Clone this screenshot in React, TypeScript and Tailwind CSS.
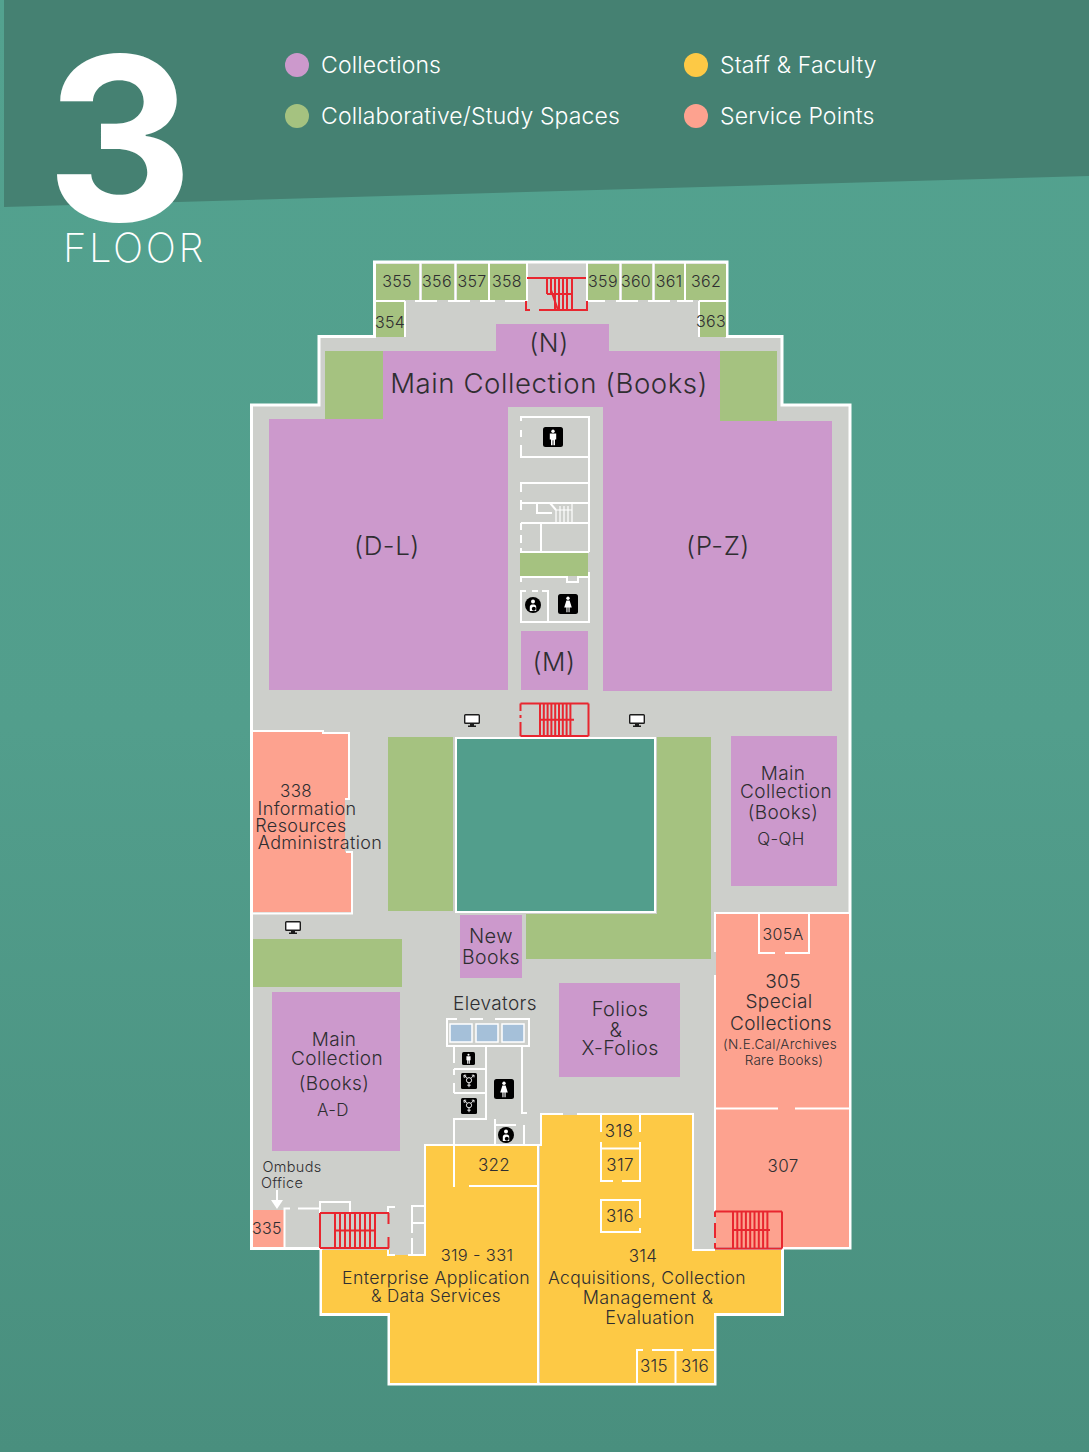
const FONT = "font-[Inter,'Liberation_Sans',sans-serif]";

const legend = [
  { label: "Collections", dot: "bg-[#cc99cc]" },
  { label: "Staff & Faculty", dot: "bg-[#fdc945]" },
  { label: "Collaborative/Study Spaces", dot: "bg-[#a5c280]" },
  { label: "Service Points", dot: "bg-[#fda28f]" },
];

// plain rectangular rooms, drawn over the floor plate
const rooms = [
  // top wing
  "left-[376px] top-[264px] h-[36px] w-[43px] bg-[#a5c280]",
  "left-[422px] top-[264px] h-[36px] w-[32px] bg-[#a5c280]",
  "left-[457px] top-[264px] h-[36px] w-[31px] bg-[#a5c280]",
  "left-[490px] top-[264px] h-[36px] w-[36px] bg-[#a5c280]",
  "left-[588px] top-[264px] h-[36px] w-[31px] bg-[#a5c280]",
  "left-[622px] top-[264px] h-[36px] w-[30px] bg-[#a5c280]",
  "left-[655px] top-[264px] h-[36px] w-[29px] bg-[#a5c280]",
  "left-[686px] top-[264px] h-[36px] w-[40px] bg-[#a5c280]",
  "left-[376px] top-[302px] h-[35px] w-[28px] bg-[#a5c280]",
  "left-[700px] top-[302px] h-[35px] w-[26px] bg-[#a5c280]",
  // main collection
  "left-[325px] top-[351px] h-[68px] w-[58px] bg-[#a5c280]",
  "left-[720px] top-[351px] h-[70px] w-[57px] bg-[#a5c280]",
  "left-[496px] top-[324px] h-[27px] w-[113px] bg-[#cc99cc]",
  "left-[383px] top-[351px] h-[56px] w-[337px] bg-[#cc99cc]",
  "left-[269px] top-[419px] h-[271px] w-[239px] bg-[#cc99cc]",
  "left-[383px] top-[407px] h-[12px] w-[125px] bg-[#cc99cc]",
  "left-[603px] top-[421px] h-[270px] w-[229px] bg-[#cc99cc]",
  "left-[603px] top-[407px] h-[14px] w-[117px] bg-[#cc99cc]",
  "left-[521px] top-[631px] h-[59px] w-[67px] bg-[#cc99cc]",
  "left-[520px] top-[553px] h-[23px] w-[68px] bg-[#a5c280]",
  // middle
  "left-[388px] top-[737px] h-[174px] w-[65px] bg-[#a5c280]",
  "left-[731px] top-[736px] h-[150px] w-[106px] bg-[#cc99cc]",
  "left-[253px] top-[939px] h-[48px] w-[149px] bg-[#a5c280]",
  "left-[460px] top-[915px] h-[63px] w-[62px] bg-[#cc99cc]",
  "left-[272px] top-[992px] h-[159px] w-[128px] bg-[#cc99cc]",
  "left-[559px] top-[983px] h-[94px] w-[121px] bg-[#cc99cc]",
  // service points
  "left-[716px] top-[914px] h-[333px] w-[133px] bg-[#fda28f]",
  "left-[253px] top-[1210px] h-[37px] w-[31px] bg-[#fda28f]",
];

const labels = [
  { t: "355", c: "left-[397px] top-[281px] text-[16px]" },
  { t: "356", c: "left-[437px] top-[281px] text-[16px]" },
  { t: "357", c: "left-[472px] top-[281px] text-[16px]" },
  { t: "358", c: "left-[507px] top-[281px] text-[16px]" },
  { t: "359", c: "left-[603px] top-[281px] text-[16px]" },
  { t: "360", c: "left-[636px] top-[281px] text-[16px]" },
  { t: "361", c: "left-[669px] top-[281px] text-[16px]" },
  { t: "362", c: "left-[706px] top-[281px] text-[16px]" },
  { t: "354", c: "left-[390px] top-[322px] text-[16px]" },
  { t: "363", c: "left-[711px] top-[321px] text-[16px]" },
  { t: "(N)", c: "left-[549px] top-[343px] text-[26px]" },
  { t: "Main Collection (Books)", c: "left-[549px] top-[384px] text-[27.6px]" },
  { t: "(D-L)", c: "left-[387px] top-[546px] text-[26px]" },
  { t: "(P-Z)", c: "left-[718px] top-[546px] text-[26px]" },
  { t: "(M)", c: "left-[554px] top-[662px] text-[26px]" },
  { t: "338", c: "left-[296px] top-[791px] text-[17px]" },
  { t: "Information", c: "left-[307px] top-[809px] text-[18px]" },
  { t: "Resources", c: "left-[301px] top-[826px] text-[18px]" },
  { t: "Administration", c: "left-[320px] top-[843px] text-[18px]" },
  { t: "Main", c: "left-[783px] top-[773px] text-[19px]" },
  { t: "Collection", c: "left-[786px] top-[791px] text-[19px]" },
  { t: "(Books)", c: "left-[783px] top-[812px] text-[19px]" },
  { t: "Q-QH", c: "left-[781px] top-[839px] text-[17px]" },
  { t: "New", c: "left-[491px] top-[936px] text-[20px]" },
  { t: "Books", c: "left-[491px] top-[958px] text-[19.5px]" },
  { t: "Elevators", c: "left-[495px] top-[1003px] text-[19px]" },
  { t: "Folios", c: "left-[620px] top-[1009px] text-[20px]" },
  { t: "&", c: "left-[616px] top-[1030px] text-[20px]" },
  { t: "X-Folios", c: "left-[620px] top-[1049px] text-[19.5px]" },
  { t: "Main", c: "left-[334px] top-[1039px] text-[19px]" },
  { t: "Collection", c: "left-[337px] top-[1058px] text-[19px]" },
  { t: "(Books)", c: "left-[334px] top-[1083px] text-[19px]" },
  { t: "A-D", c: "left-[333px] top-[1110px] text-[17px]" },
  { t: "305A", c: "left-[783px] top-[934px] text-[16px]" },
  { t: "305", c: "left-[783px] top-[981px] text-[19px]" },
  { t: "Special", c: "left-[779px] top-[1001px] text-[19px]" },
  { t: "Collections", c: "left-[781px] top-[1023px] text-[19px]" },
  { t: "(N.E.Cal/Archives", c: "left-[780px] top-[1045px] text-[13.5px]" },
  { t: "Rare Books)", c: "left-[784px] top-[1061px] text-[13.5px]" },
  { t: "307", c: "left-[783px] top-[1166px] text-[17px]" },
  { t: "322", c: "left-[494px] top-[1165px] text-[17px]" },
  { t: "318", c: "left-[619px] top-[1131px] text-[17px]" },
  { t: "317", c: "left-[620px] top-[1165px] text-[17px]" },
  { t: "316", c: "left-[620px] top-[1216px] text-[17px]" },
  { t: "314", c: "left-[643px] top-[1256px] text-[17px]" },
  { t: "Acquisitions, Collection", c: "left-[647px] top-[1278px] text-[17.5px]" },
  { t: "Management &", c: "left-[648px] top-[1298px] text-[18px]" },
  { t: "Evaluation", c: "left-[650px] top-[1318px] text-[18px]" },
  { t: "315", c: "left-[654px] top-[1366px] text-[17px]" },
  { t: "316", c: "left-[695px] top-[1366px] text-[17px]" },
  { t: "319 - 331", c: "left-[477px] top-[1255px] text-[16.5px]" },
  { t: "Enterprise Application", c: "left-[436px] top-[1278px] text-[17.7px]" },
  { t: "& Data Services", c: "left-[436px] top-[1296px] text-[17px]" },
  { t: "335", c: "left-[267px] top-[1228px] text-[16px]" },
  { t: "Ombuds", c: "left-[292px] top-[1167px] text-[14.5px]" },
  { t: "Office", c: "left-[282px] top-[1183px] text-[14.5px]" },
];

const WALLS = [
  // top wing
  "M420.5 263V301M455.5 263V301M489 263V301M527 263V301M587 263V301M620.5 263V301M653.5 263V301M685 263V301",
  "M376 301H405M415 301H437M448 301H470M480 301H495M505 301H526M588 301H605M616 301H638M648 301H670M677 301H693M699 301H726",
  "M405 301V337M699 301V337",
  // centre core
  "M521 421V417H589V552M521 430V437M521 445V457H589M521 492V483H589M521 500V510M521 503H589",
  "M537 503V513H552M550 503L556 510M521 523H589M541 523V552M521 523V530M521 535V543M521 548V552H589",
  "M521 582V577H567V582H578V577H589M589 572V622H521V591H526M532 591H538M542 591H548V622",
  // 338
  "M252 731H323V733H349V799H345M346 852H352V913.5H252",
  // elevators and washrooms
  "M447 1030V1019H457M470 1019H483M495 1019H525H529V1046H447V1030",
  "M454 1047V1063M454 1069V1075M454 1083V1093M454 1118V1187M454 1069H486M454 1093H486M486 1047V1119H454M495 1119V1145M495 1125H516M524 1125V1145M522 1047V1113H527",
  // staff wing
  "M425 1207V1145H541V1114H563M577 1114H693V1250H715M469 1186H538M538 1146V1384",
  "M601 1114V1132M601 1142V1181H613M622 1181H640V1142M640 1132V1114M601 1148.5H640",
  "M640 1218V1200H601V1232H640V1228M637 1384V1350H643M652 1350H683M692 1350H714M675.5 1350V1384",
  // special collections
  "M715 913H850M715 912V952M715 975V1211M716 1108.5H778M795 1108.5H849M759 914V953H775M785 953H809V914",
  // south west
  "M284.5 1248V1208.5H290M298 1208.5H320M320 1213V1202H350V1213M388 1213V1207H395M388 1250V1255H395M408 1255H425V1207M412 1233V1206H425M412 1238V1255M412 1223H425",
];

function Stairs({ x, y, w, h, from, to, step, sides }: { x: number; y: number; w: number; h: number; from: number; to: number; step: number; sides: string }) {
  const treads = [];
  for (let tx = from; tx <= to; tx += step) treads.push(`M${tx} ${y}V${y + h}`);
  return (
    <path
      d={`${sides}M${x} ${y}H${x + w}M${x} ${y + h}H${x + w}M${from} ${y + h / 2}H${to}${treads.join("")}`}
      fill="none"
      stroke="#e8262f"
      strokeWidth="2"
    />
  );
}

function FloorPlate() {
  return (
    <svg className="absolute left-0 top-0" width="1089" height="1452">
      <path
        d="M374.5 262H727V336.5H782V405H850V1248H782.5V1314.5H715V1384H389V1314.5H321V1248.5H251.5V405H319V336.5H374.5Z"
        fill="#cdcfcb"
        stroke="#fff"
        strokeWidth="3"
      />
      <rect x="456" y="738" width="199" height="174" fill="#529e8c" stroke="#fff" strokeWidth="2" />
      <path d="M657 737H711V959H526V914H657Z" fill="#a5c280" />
      <path d="M253 732H323V734H349V799H345V852H351V912H253Z" fill="#fda28f" />
      <path d="M425 1146H538V1383H390V1313H322V1250H390V1255H425Z" fill="#fdc945" />
      <path d="M541 1115H693V1250H781V1313H714V1383H540V1146H541Z" fill="#fdc945" />
    </svg>
  );
}

function Walls() {
  return (
    <svg className="absolute left-0 top-0" width="1089" height="1452">
      <path d={WALLS.join("")} fill="none" stroke="#fff" strokeWidth="2" />
      {/* elevator cars */}
      <rect x="450" y="1024" width="22" height="18" fill="#a5c0d9" stroke="#fff" strokeWidth="1.5" />
      <rect x="476" y="1024" width="22" height="18" fill="#a5c0d9" stroke="#fff" strokeWidth="1.5" />
      <rect x="502" y="1024" width="22" height="18" fill="#a5c0d9" stroke="#fff" strokeWidth="1.5" />
      {/* white stair in the core */}
      <path d="M556 510V523M560 506V523M564 506V523M568 506V523M572 503V523M556 510H572" stroke="#fff" strokeWidth="1.2" fill="none" />
      {/* stairs */}
      <Stairs x={520.5} y={703.5} w={68} h={32.5} from={540} to={574} step={3.8} sides="M520.5 703.5V711M520.5 715V718M520.5 722V736M588.5 703.5V736" />
      <Stairs x={320} y={1213} w={69} h={35} from={335} to={376} step={5} sides="M320 1213V1248M388.500 1213V1224M388.500 1237V1248" />
      <Stairs x={715} y={1211.5} w={67} h={37} from={733} to={770} step={4.3} sides="M715 1211.500V1217M715 1223V1238M715 1243V1248.500M782 1211.500V1248.500" />
      <path
        d="M527 278H586M526 301V310H530M539 310H587V301M551 290L558 310M547 278V294M551 278V294M555 278V310M559 278V310M563 278V310M567 278V310M572 278V310M547 294H572"
        fill="none"
        stroke="#e8262f"
        strokeWidth="2"
      />
      {/* arrow to the ombuds office */}
      <path d="M277 1190V1202" stroke="#fff" strokeWidth="2" />
      <path d="M271 1200H283L277 1209Z" fill="#fff" />
    </svg>
  );
}

function ManIcon({ className }: { className: string }) {
  return (
    <svg className={`absolute ${className}`} viewBox="0 0 20 20">
      <rect width="20" height="20" rx="2.5" fill="#000" />
      <circle cx="10" cy="4.2" r="1.7" fill="#fff" />
      <path d="M6.8 6.6h6.4v6h-1.2v5.6h-1.6v-5h-.8v5H8v-5.6H6.8z" fill="#fff" />
    </svg>
  );
}

function WomanIcon({ className }: { className: string }) {
  return (
    <svg className={`absolute ${className}`} viewBox="0 0 20 20">
      <rect width="20" height="20" rx="2.5" fill="#000" />
      <circle cx="10" cy="4.2" r="1.7" fill="#fff" />
      <path d="M8.4 6.4h3.2l2.2 7h-2.2v4.8h-1.1v-4.8h-1v4.8H8.400v-4.800H6.200z" fill="#fff" />
    </svg>
  );
}

function TransIcon({ className }: { className: string }) {
  return (
    <svg className={`absolute ${className}`} viewBox="0 0 16 16">
      <rect width="16" height="16" rx="1.500" fill="#000" />
      <g fill="none" stroke="#fff" strokeWidth="0.900">
        <circle cx="8" cy="7.200" r="2.600" />
        <path d="M8 9.800V14.200M6.300 12.200H9.700M6.100 5.300L3 2.200M3 4.400V2.200H5.200M9.900 5.300L13 2.200M10.800 2.200H13V4.400M3.400 4.800L5 3.200" />
      </g>
    </svg>
  );
}

function BabyIcon({ className }: { className: string }) {
  return (
    <svg className={`absolute ${className}`} viewBox="0 0 16 16">
      <circle cx="8" cy="8" r="8" fill="#000" />
      <circle cx="8" cy="4.600" r="2" fill="#fff" />
      <path d="M4.800 14V9.800C4.800 8 6.300 7.400 8 7.400S11.200 8 11.200 9.800V14Z" fill="#fff" />
      <circle cx="8.800" cy="11.800" r="2" fill="#000" />
    </svg>
  );
}

function MonitorIcon({ className }: { className: string }) {
  return (
    <svg className={`absolute ${className}`} viewBox="0 0 16 13">
      <rect x="0.700" y="0.700" width="14.600" height="8.600" rx="0.800" fill="#fff" stroke="#1c1c1c" strokeWidth="1.400" />
      <path d="M6 10h4v1.500h2V13H4v-1.500h2z" fill="#1c1c1c" />
    </svg>
  );
}

function FloorMap() {
  return (
    <div className="absolute left-0 top-0 h-[1452px] w-[1089px]">
      <FloorPlate />
      {rooms.map((c) => (
        <div key={c} className={`absolute ${c}`} />
      ))}
      <Walls />
      <ManIcon className="left-[543px] top-[427px] size-5" />
      <BabyIcon className="left-[525px] top-[597px] size-4" />
      <WomanIcon className="left-[558px] top-[594px] size-5" />
      <ManIcon className="left-[462px] top-[1052px] size-[13px]" />
      <TransIcon className="left-[461px] top-[1073px] size-4" />
      <TransIcon className="left-[461px] top-[1098px] size-4" />
      <WomanIcon className="left-[494px] top-[1079px] size-5" />
      <BabyIcon className="left-[498px] top-[1127px] size-4" />
      <MonitorIcon className="left-[464px] top-[714px] h-[13px] w-4" />
      <MonitorIcon className="left-[629px] top-[714px] h-[13px] w-4" />
      <MonitorIcon className="left-[285px] top-[921px] h-[13px] w-4" />
      {labels.map((l) => (
        <span
          key={l.c}
          className={`absolute -translate-x-1/2 -translate-y-1/2 whitespace-nowrap font-[350] leading-none tracking-[0.02em] text-[#2f2e31] ${l.c}`}
        >
          {l.t}
        </span>
      ))}
    </div>
  );
}

export default function App() {
  return (
    <div className={`relative h-[1452px] w-[1089px] overflow-hidden bg-linear-to-b from-[#53a28f] via-[#529e8c] to-[#498f7e] ${FONT}`}>
      <div className="absolute left-1 top-0 h-[207px] w-[1085px] bg-[#458172] [clip-path:polygon(0_0,100%_0,100%_176px,0_207px)]" />
      <FloorMap />
      <header className="relative flex h-[207px] pl-[46px] text-white">
        <div className="w-[239px] shrink-0">
          <div className="mt-[24px] text-[228px] font-bold leading-none">3</div>
          <div className="-mt-[24px] ml-[17px] text-[40px] font-extralight leading-[40px] tracking-[2.6px]">FLOOR</div>
        </div>
        <ul className="grid h-fit grid-cols-[399px_auto] gap-y-[27px] pt-[53px]">
          {legend.map((item) => (
            <li key={item.label} className="flex h-6 items-center gap-[12px] text-[23px] font-light tracking-[0.006em]">
              <span className={`size-6 rounded-full ${item.dot}`} />
              {item.label}
            </li>
          ))}
        </ul>
      </header>
    </div>
  );
}
